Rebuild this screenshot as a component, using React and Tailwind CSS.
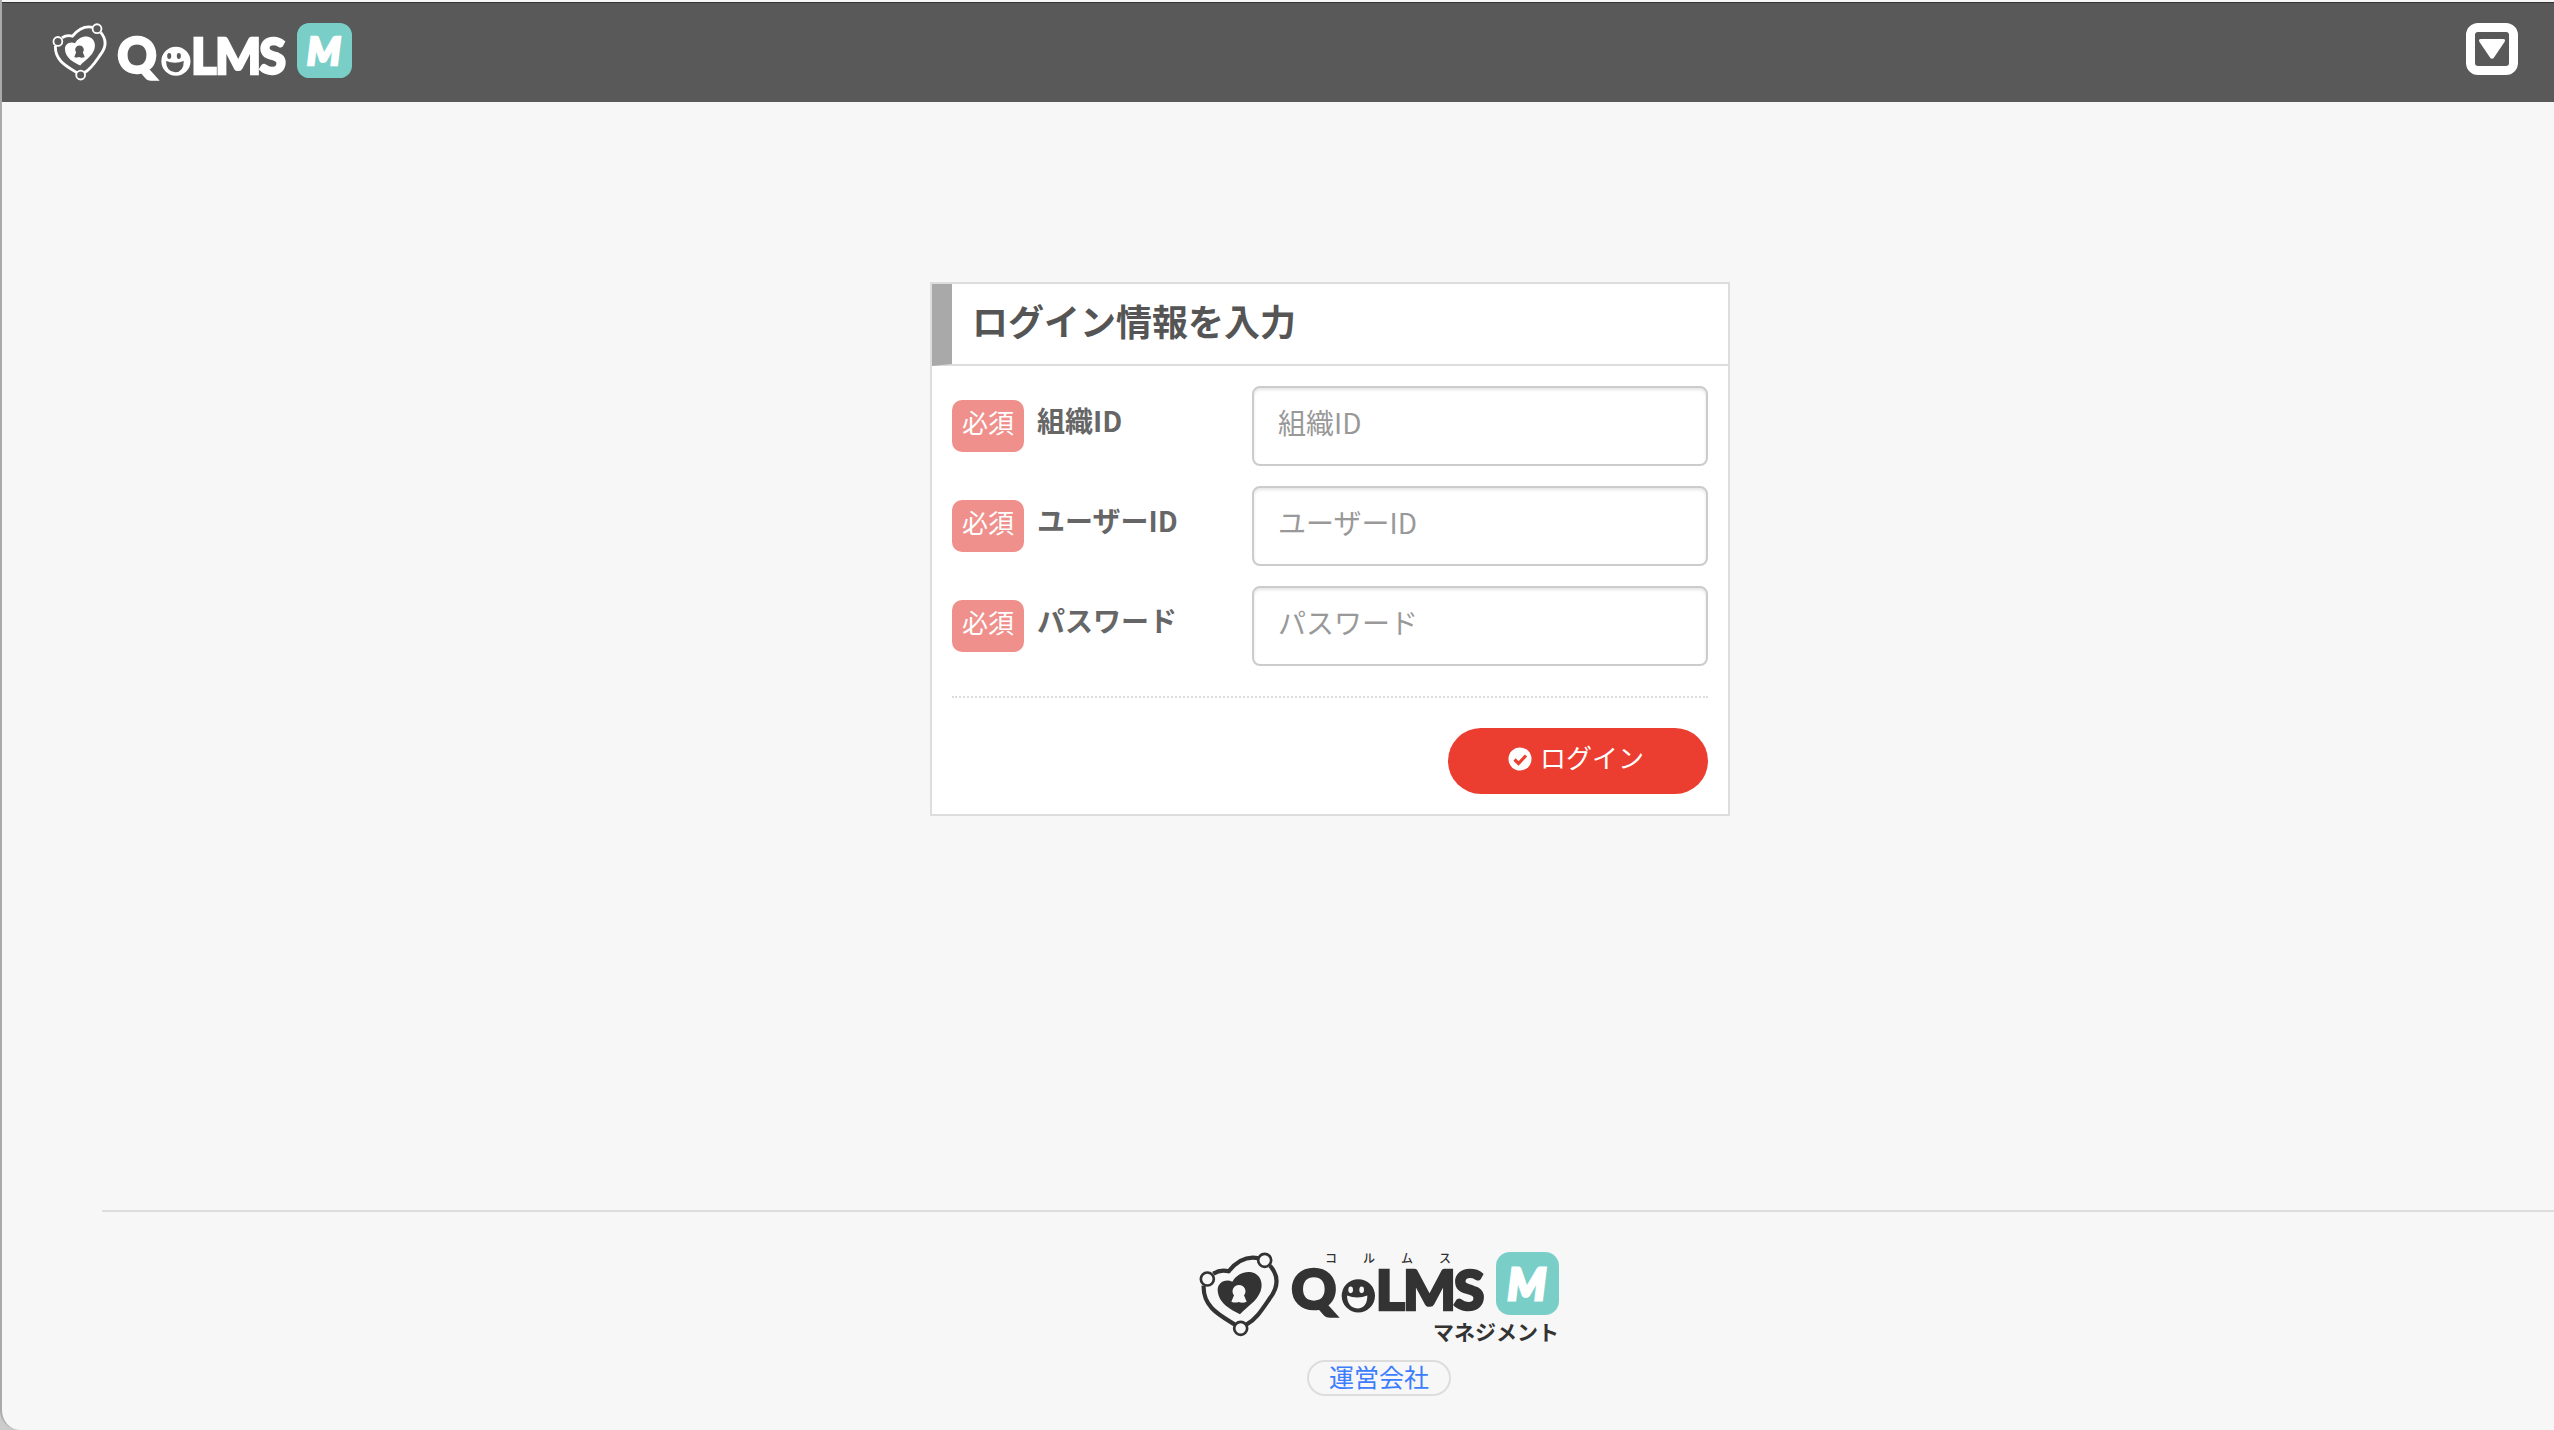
import React from "react";

const fields = [
  { id: "organization", label: "組織ID", type: "text" },
  { id: "user", label: "ユーザーID", type: "text" },
  { id: "password", label: "パスワード", type: "password" },
];

function Shield({ className }) {
  return (
    <svg viewBox="55 185 240 255" className={className} fill="none" stroke="currentColor" aria-hidden="true">
      <path
        d="M98 250 Q120 236 144 243 C168 213 198 196 234 204 M268 226 C294 256 293 290 268 323 C247 353 228 386 197 403 M163 403 C118 375 66 350 69 286"
        strokeWidth="12.5"
        strokeLinejoin="round"
      />
      <circle cx="80" cy="266" r="19.5" strokeWidth="8" />
      <circle cx="252" cy="210" r="19.5" strokeWidth="8" />
      <circle cx="180" cy="414" r="19.5" strokeWidth="8" />
      <path
        fill="currentColor"
        stroke="none"
        fillRule="evenodd"
        d="M155 274 C168 252 192 241 213 246 C240 252 248 280 240 302 C229 333 202 346 178 372 C148 357 113 338 111 300 C110 278 133 264 155 274 Z M175 284 A19 19 0 0 0 160 315 L152 334 Q163 339 174 335 Q186 340 198 334 L190 315 A19 19 0 0 0 175 284 Z"
      />
    </svg>
  );
}

function Wordmark({ className }) {
  return (
    <svg
      viewBox="333 234 576 137"
      className={`overflow-visible ${className}`}
      fill="currentColor"
      role="img"
      aria-label="QOLMS"
      fontFamily="Lato, sans-serif"
      fontWeight="900"
      fontSize="167"
    >
      <path
        fillRule="evenodd"
        d="M535 267 A50 50 0 1 0 535 367 A50 50 0 1 0 535 267 Z M512 289 A7 10 0 1 1 512 309 A7 10 0 1 1 512 289 Z M545 289 A7 10 0 1 1 545 309 A7 10 0 1 1 545 289 Z M501 316 Q532 328 562 316 Q562 354 532 355 Q502 352 501 316 Z"
      />
      <g stroke="currentColor" strokeWidth="8">
        <text x="334" y="358">Q</text>
        <text x="587" y="361">L</text>
        <text x="669" y="361">M</text>
        <text x="821" y="361">S</text>
      </g>
    </svg>
  );
}

function Tile({ className }) {
  return (
    <svg viewBox="0 0 188 188" className={className} aria-hidden="true">
      <rect width="188" height="188" rx="42" fill="#79cfc7" />
      <text
        x="92"
        y="143"
        textAnchor="middle"
        fill="#fff"
        stroke="#fff"
        strokeWidth="9"
        fontFamily="Lato, sans-serif"
        fontWeight="900"
        fontStyle="italic"
        fontSize="130"
      >
        M
      </text>
    </svg>
  );
}

function Header() {
  return (
    <header className="flex items-start justify-between border-t border-[#333] bg-[#595959] pt-5 pr-9 pb-[21px] pl-[50px] text-white">
      <a href="#" aria-label="QOLMS M" className="flex items-start">
        <Shield className="h-[58px] w-[55px]" />
        <Wordmark className="mt-[14px] ml-[10px] h-[40px] w-[168px]" />
        <Tile className="ml-3 size-[55px]" />
      </a>
      <button
        type="button"
        aria-label="メニュー"
        className="flex size-[52px] items-center justify-center rounded-xl border-[9px] border-white"
      >
        <svg viewBox="0 0 26 20" className="h-5 w-[26px]" fill="currentColor" aria-hidden="true">
          <path d="M2 0H24Q27 0 25.500 3L15 18.500Q13 21 11 18.500L0.500 3Q-1 0 2 0Z" />
        </svg>
      </button>
    </header>
  );
}

function Field({ id, label, type }) {
  return (
    <div className="flex items-center">
      <label htmlFor={id} className="flex w-[300px] items-center">
        <span className="flex h-[52px] w-[72px] items-center justify-center rounded-[10px] bg-[#f0908c] pb-2 text-[26px] leading-none text-white">
          必須
        </span>
        <span className="ml-[13px] pb-3 text-[28px] leading-none font-bold text-[#666]">{label}</span>
      </label>
      <input
        id={id}
        type={type}
        placeholder={label}
        className="h-20 min-w-0 flex-1 rounded-lg border-2 border-[#ccc] bg-white px-6 pb-2 text-[28px] text-[#555] shadow-[inset_0_2px_3px_rgba(0,0,0,0.1)] placeholder:text-[#999]"
      />
    </div>
  );
}

function LoginCard() {
  return (
    <form className="w-[800px] max-w-full border-2 border-[#ddd] bg-white">
      <h1 className="flex h-[82px] items-center border-b-2 border-l-20 border-b-[#ddd] border-l-[#a9a9a9] pb-2 pl-5 text-[36px] leading-none font-bold text-[#555]">
        ログイン情報を入力
      </h1>
      <div className="p-5">
        <div className="flex flex-col gap-5">
          {fields.map((field) => (
            <Field key={field.id} {...field} />
          ))}
        </div>
        <hr className="mt-[30px] mb-[30px] border-t-2 border-dotted border-[#ddd]" />
        <div className="flex justify-end">
          <button
            type="button"
            className="flex h-[66px] w-[260px] items-center justify-center gap-2 rounded-full bg-[#eb3d30] pr-1 pb-2 text-[26px] leading-none text-white"
          >
            <svg viewBox="0 0 24 24" className="mt-1 size-6" aria-hidden="true">
              <circle cx="12" cy="12" r="11.500" fill="#fff" />
              <path d="M6.500 12.500L10.500 16.500L18 8.500" fill="none" stroke="#eb3d30" strokeWidth="3.200" />
            </svg>
            ログイン
          </button>
        </div>
      </div>
    </form>
  );
}

function Footer() {
  return (
    <footer className="ml-[100px] flex flex-col items-center border-t-2 border-[#ddd] pt-10 pb-[34px] pl-[102px]">
      <div className="flex items-start text-[#333]">
        <Shield className="h-[85px] w-20" />
        <div className="ml-3 flex flex-col items-end">
          <div className="flex items-start">
            <div className="flex flex-col">
              <div className="mr-8 ml-[34px] flex justify-between pb-1 text-[12px] leading-none font-medium">
                <span>コ</span>
                <span>ル</span>
                <span>ム</span>
                <span>ス</span>
              </div>
              <Wordmark className="h-[46px] w-[192px]" />
            </div>
            <Tile className="ml-[13px] size-[63px]" />
          </div>
          <p className="mt-[6px] text-[21px] leading-none font-bold">マネジメント</p>
        </div>
      </div>
      <a
        href="#"
        className="mt-[18px] flex h-9 w-36 items-center justify-center rounded-full border-2 border-[#ddd] pb-1 text-[25px] leading-none text-[#3c7cff]"
      >
        運営会社
      </a>
    </footer>
  );
}

export default function App() {
  return (
    <div className="bg-[#ccc]">
      <div className="flex min-h-screen flex-col overflow-hidden rounded-bl-[20px] border-l-2 border-[#aaa] bg-[#f7f7f7] pt-[2px] font-['Noto_Sans_CJK_JP',sans-serif]">
        <Header />
        <main className="ml-[104px] flex flex-1 items-start justify-center pt-[180px]">
          <LoginCard />
        </main>
        <Footer />
      </div>
    </div>
  );
}
